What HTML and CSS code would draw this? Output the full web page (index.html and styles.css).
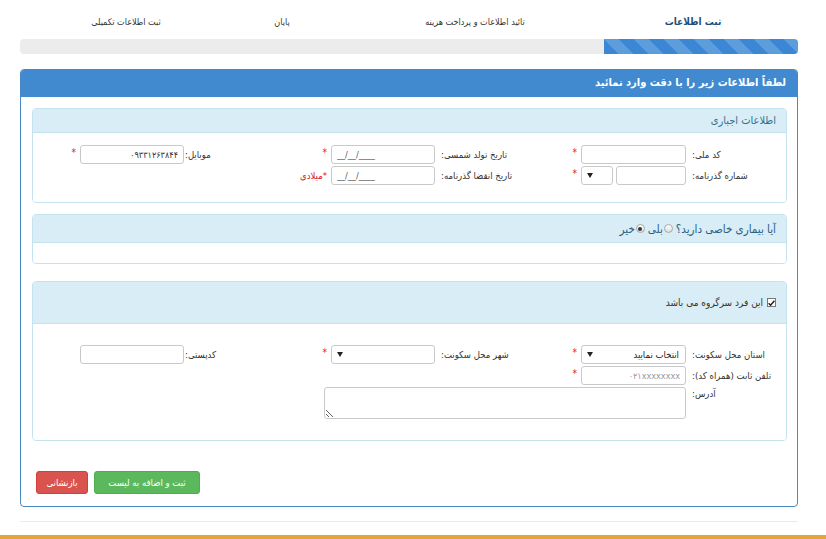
FILE: index.html
```html
<!DOCTYPE html>
<html lang="fa" dir="rtl">
<head>
<meta charset="utf-8">
<link rel="stylesheet" href="styles.css">
</head>
<body>
<div class="wrap">
  <div class="steps">
    <div class="step active">ثبت اطلاعات</div>
    <div class="step">تائید اطلاعات و پرداخت هزینه</div>
    <div class="step">پایان</div>
    <div class="step">ثبت اطلاعات تکمیلی</div>
  </div>
  <div class="progress"><div class="bar"></div></div>

  <div class="panel">
    <div class="panel-heading">لطفاً اطلاعات زیر را با دقت وارد نمائید</div>
    <div class="panel-body">
      <div class="sub">
        <div class="sub-heading">اطلاعات اجباری</div>
        <div class="sub-body b1">
          <div class="row">
            <div class="field"><span class="lbl">کد ملی:</span><input class="inp" type="text"><span class="star">*</span></div>
            <div class="field"><span class="lbl">تاریخ تولد شمسی:</span><input class="inp w104 date" type="text" value="__/__/____"><span class="star">*</span></div>
            <div class="field"><span class="lbl lbl-near">موبایل:</span><input class="inp w104" type="text" value="۰۹۳۳۱۲۶۳۸۴۴"><span class="star">*</span></div>
          </div>
          <div class="row">
            <div class="field"><span class="lbl">شماره گذرنامه:</span><span class="pair"><input class="inp w70" type="text"><span class="sel sm"><span></span><svg width="6" height="5" viewBox="0 0 6 5"><path d="M0 0H6L3 5Z" fill="#222"/></svg></span></span><span class="star">*</span></div>
            <div class="field"><span class="lbl">تاریخ انقضا گذرنامه:</span><input class="inp w104 date" type="text" value="__/__/____"><span class="miladi">*میلادی</span></div>
            <div class="field"></div>
          </div>
        </div>
      </div>

      <div class="sub s2">
        <div class="sub-heading big">آیا بیماری خاصی دارید؟<span class="radio"></span>بلی <span class="radio on"></span>خیر</div>
        <div class="sub-body b2"></div>
      </div>

      <div class="sub s3">
        <div class="sub-heading tall"><span class="chk"><svg width="7" height="6" viewBox="0 0 7 6"><path d="M0.6 3.2L2.6 5.2L6.4 0.8" fill="none" stroke="#222" stroke-width="1.5"/></svg></span>این فرد سرگروه می باشد</div>
        <div class="sub-body b3">
          <div class="row">
            <div class="field"><span class="lbl">استان محل سکونت:</span><span class="sel"><span>انتخاب نمایید</span><svg width="6" height="5" viewBox="0 0 6 5"><path d="M0 0H6L3 5Z" fill="#222"/></svg></span><span class="star">*</span></div>
            <div class="field"><span class="lbl">شهر محل سکونت:</span><span class="sel w104"><span></span><svg width="6" height="5" viewBox="0 0 6 5"><path d="M0 0H6L3 5Z" fill="#222"/></svg></span><span class="star">*</span></div>
            <div class="field"><span class="lbl lbl-near">کدپستی:</span><input class="inp w104" type="text"></div>
          </div>
          <div class="row">
            <div class="field"><span class="lbl">تلفن ثابت (همراه کد):</span><input class="inp ph" type="text" placeholder="۰۲۱xxxxxxxx"><span class="star">*</span></div>
            <div class="field"></div>
            <div class="field"></div>
          </div>
          <div class="addr">
            <span class="lbl top">آدرس:</span><textarea class="ta"></textarea>
          </div>
        </div>
      </div>

      <div class="actions">
        <button class="btn green">ثبت و اضافه به لیست</button>
        <button class="btn red">بازنشانی</button>
      </div>
    </div>
  </div>
  <div class="hr"></div>
</div>
<div class="gold"></div>
</body>
</html>
```
FILE: styles.css
```css
* { box-sizing: border-box; }
html, body { margin: 0; padding: 0; }
body {
  direction: rtl;
  font-family: "DejaVu Sans Condensed", "DejaVu Sans", sans-serif;
  font-size: 10px;
  color: #333;
  background: #fff;
  width: 826px;
  height: 539px;
  overflow: hidden;
  position: relative;
}
.wrap { margin: 0 28px 0 20px; }

.steps {
  display: grid;
  grid-template-columns: 210px 226px 160px 152px;
  padding-top: 15px;
  height: 39px;
  font-size: 9px;
  color: #333;
}
.step { text-align: center; line-height: 14px; white-space: nowrap; }
.step.active { font-weight: bold; color: #1d4f7a; font-size: 10px; }

.progress {
  height: 15px;
  background: #ececec;
  border-radius: 4px;
  display: flex;
}
.bar {
  width: 194px;
  height: 15px;
  border-radius: 0 4px 4px 0;
  background-color: #3b87d3;
  background-image: linear-gradient(45deg, rgba(255,255,255,.18) 25%, transparent 25%, transparent 50%, rgba(255,255,255,.18) 50%, rgba(255,255,255,.18) 75%, transparent 75%, transparent);
  background-size: 30px 30px;
}

.panel {
  margin-top: 15px;
  border: 1px solid #4b87c0;
  border-radius: 4px;
  height: 438px;
}
.panel-heading {
  height: 27px;
  background: #418ad0;
  color: #fff;
  font-weight: bold;
  font-size: 11px;
  line-height: 25px;
  padding: 0 11px;
  border-radius: 3px 3px 0 0;
}
.panel-body { padding: 11px 10px 0 11px; }

.sub {
  border: 1px solid #c4e3ef;
  border-radius: 4px;
  overflow: hidden;
}
.sub-heading {
  background: #d9edf7;
  color: #31708f;
  font-size: 11px;
  height: 24px;
  line-height: 24px;
  padding: 0 10px;
  border-bottom: 1px solid #c4e3ef;
}
.sub-heading.big { height: 28px; line-height: 28px; font-size: 11.5px; color: #2c5f7f; display: flex; align-items: center; }
.sub-heading.tall { height: 42px; line-height: 42px; color: #333; font-size: 10px; display: flex; align-items: center; }
.s2 { margin-top: 11px; }
.s3 { margin-top: 17px; }

.sub-body { background: #fff; }
.b1 { height: 69px; padding-top: 12px; }
.b2 { height: 20px; }
.b3 { height: 116px; padding-top: 21px; }

.row {
  display: grid;
  grid-template-columns: 251px 251px 251px;
  height: 21px;
}
.field { display: flex; align-items: flex-start; }
.lbl {
  width: 100px;
  flex: none;
  text-align: left;
  padding-left: 6px;
  line-height: 19px;
  font-size: 9.5px;
  color: #333;
  white-space: nowrap;
}
.lbl-near { padding-left: 1px; }
.lbl.top { line-height: 14px; }
.inp {
  width: 105px;
  height: 19px;
  border: 1px solid #c9c9c9;
  border-radius: 3px;
  font-family: "DejaVu Sans Condensed", "DejaVu Sans", sans-serif;
  font-size: 9px;
  padding: 0 5px;
  color: #333;
  direction: rtl;
  background: #fff;
  outline: none;
}
.inp.w104 { width: 104px; }
.inp.w70 { width: 70px; }
.inp.date { direction: ltr; text-align: left; color: #555; }
.inp.ph::placeholder { color: #999; }
.pair { display: flex; gap: 3px; width: 105px; }
.sel {
  width: 105px;
  height: 19px;
  border: 1px solid #c9c9c9;
  border-radius: 3px;
  display: flex;
  justify-content: space-between;
  align-items: center;
  padding: 0 6px 0 5px;
  font-size: 9.5px;
  color: #222;
  background: #fff;
}
.sel.sm { width: 32px; }
.sel.w104 { width: 104px; }
.star { color: #e02020; font-size: 10px; padding-right: 4px; line-height: 16px; }
.miladi { color: #d8121b; font-size: 9.5px; padding-right: 4px; line-height: 19px; }

.addr { display: flex; align-items: flex-start; margin-top: 0; }
.ta {
  width: 362px;
  height: 32px;
  border: 1px solid #c9c9c9;
  border-radius: 3px;
  resize: both;
  font-family: inherit;
  margin: 0;
}

.radio {
  display: inline-block;
  width: 9px;
  height: 9px;
  border: 1px solid #a8a8a8;
  border-radius: 50%;
  background: linear-gradient(#fff, #ddd);
  margin: 0 3px 0 1px;
  position: relative;
}
.radio.on::after {
  content: "";
  position: absolute;
  left: 1.5px;
  top: 1.5px;
  width: 4px;
  height: 4px;
  border-radius: 50%;
  background: #333;
}
.chk {
  width: 9px;
  height: 9px;
  border: 1px solid #777;
  background: #fff;
  margin-left: 4px;
  display: inline-flex;
  align-items: center;
  justify-content: center;
}

.actions {
  display: flex;
  justify-content: flex-end;
  gap: 6px;
  margin-top: 30px;
  padding-left: 4px;
}
.btn {
  height: 23px;
  border: 1px solid transparent;
  border-radius: 3px;
  color: #fff;
  font-family: "DejaVu Sans Condensed", "DejaVu Sans", sans-serif;
  font-size: 9.5px;
  padding: 0 4px;
  white-space: nowrap;
}
.btn.green { background: #5cb85c; border-color: #4cae4c; width: 106px; }
.btn.red { background: #d9534f; border-color: #d43f3a; width: 52px; }

.hr { margin-top: 14px; border-top: 1px solid #eaeaea; height: 1px; }
.gold {
  position: absolute;
  left: 0;
  right: 0;
  bottom: 0;
  height: 4px;
  background: #e2a63a;
}
```
